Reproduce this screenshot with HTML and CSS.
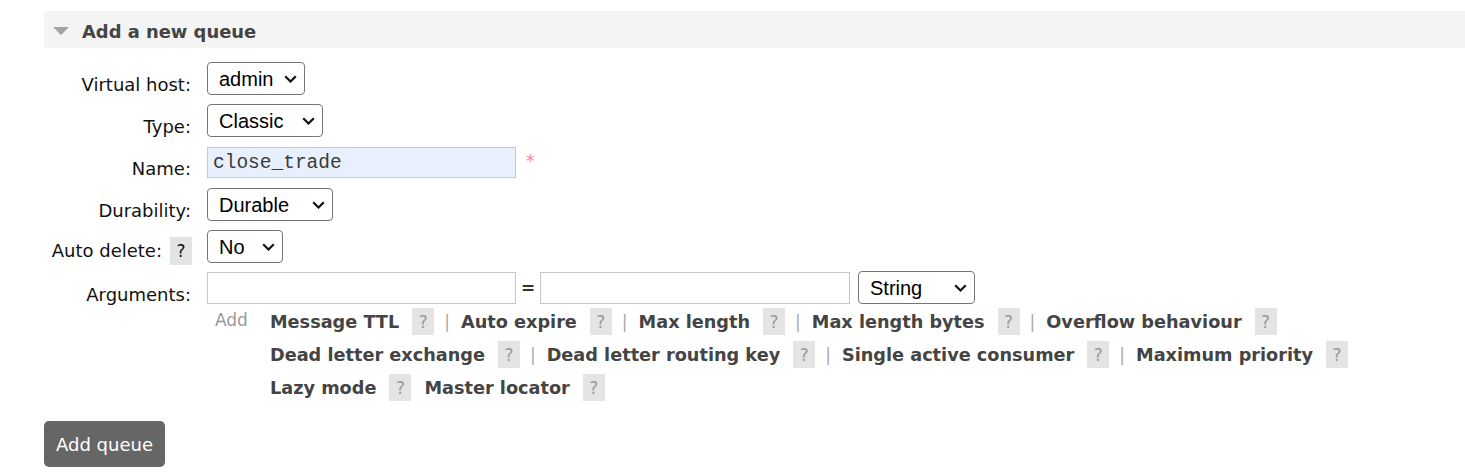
FILE: index.html
```html
<!DOCTYPE html>
<html>
<head>
<meta charset="utf-8">
<link rel="stylesheet" href="styles.css">
</head>
<body>
<div class="page">
  <div class="section-head">
    <span class="tri"></span>
    <h2 class="title">Add a new queue</h2>
  </div>
  <div class="form">
    <div class="row">
      <label class="lbl">Virtual host:</label>
      <div class="ctl"><span class="selwrap"><select class="sel w-vhost"><option>admin</option></select><svg class="chev" width="13" height="8" viewBox="0 0 13 8"><polyline points="1.2,1.2 6.5,6.5 11.8,1.2" fill="none" stroke="#111" stroke-width="2.2"/></svg></span></div>
    </div>
    <div class="row">
      <label class="lbl">Type:</label>
      <div class="ctl"><span class="selwrap"><select class="sel w-type"><option>Classic</option></select><svg class="chev" width="13" height="8" viewBox="0 0 13 8"><polyline points="1.2,1.2 6.5,6.5 11.8,1.2" fill="none" stroke="#111" stroke-width="2.2"/></svg></span></div>
    </div>
    <div class="row">
      <label class="lbl">Name:</label>
      <div class="ctl ctl-name"><input class="txt txt-filled" type="text" value="close_trade"><span class="req">*</span></div>
    </div>
    <div class="row">
      <label class="lbl">Durability:</label>
      <div class="ctl"><span class="selwrap"><select class="sel w-dur"><option>Durable</option></select><svg class="chev" width="13" height="8" viewBox="0 0 13 8"><polyline points="1.2,1.2 6.5,6.5 11.8,1.2" fill="none" stroke="#111" stroke-width="2.2"/></svg></span></div>
    </div>
    <div class="row">
      <label class="lbl lbl-help">Auto delete:<span class="help help-dark">?</span></label>
      <div class="ctl"><span class="selwrap"><select class="sel w-no"><option>No</option></select><svg class="chev" width="13" height="8" viewBox="0 0 13 8"><polyline points="1.2,1.2 6.5,6.5 11.8,1.2" fill="none" stroke="#111" stroke-width="2.2"/></svg></span></div>
    </div>
    <div class="row row-args">
      <label class="lbl">Arguments:</label>
      <div class="ctl ctl-args">
        <input class="txt" type="text">
        <span class="eq">=</span>
        <input class="txt txt-val" type="text">
        <span class="selwrap w-str-wrap"><select class="sel w-str"><option>String</option></select><svg class="chev" width="13" height="8" viewBox="0 0 13 8"><polyline points="1.2,1.2 6.5,6.5 11.8,1.2" fill="none" stroke="#111" stroke-width="2.2"/></svg></span>
      </div>
    </div>
    <div class="arg-help">
      <span class="add">Add</span>
      <div class="links">
        <div class="line">
          <span class="lk">Message TTL</span><span class="help">?</span><span class="pipe">|</span>
          <span class="lk">Auto expire</span><span class="help">?</span><span class="pipe">|</span>
          <span class="lk">Max length</span><span class="help">?</span><span class="pipe">|</span>
          <span class="lk">Max length bytes</span><span class="help">?</span><span class="pipe">|</span>
          <span class="lk">Overflow behaviour</span><span class="help">?</span>
        </div>
        <div class="line">
          <span class="lk">Dead letter exchange</span><span class="help">?</span><span class="pipe">|</span>
          <span class="lk">Dead letter routing key</span><span class="help">?</span><span class="pipe">|</span>
          <span class="lk">Single active consumer</span><span class="help">?</span><span class="pipe">|</span>
          <span class="lk">Maximum priority</span><span class="help">?</span>
        </div>
        <div class="line">
          <span class="lk">Lazy mode</span><span class="help">?</span>
          <span class="lk lk-gap">Master locator</span><span class="help">?</span>
        </div>
      </div>
    </div>
  </div>
  <button class="btn" type="button">Add queue</button>
</div>
</body>
</html>
```

FILE: styles.css
```css
* { box-sizing: border-box; }
body {
  margin: 0;
  background: #fff;
  font-family: "DejaVu Sans", Verdana, sans-serif;
  font-size: 18px;
  color: #111;
}
.page {
  padding: 11px 0 0 44px;
}
.section-head {
  height: 37px;
  background: #f4f4f4;
  display: flex;
  align-items: center;
  padding-top: 3px;
}
.tri {
  width: 0;
  height: 0;
  margin-left: 9px;
  border-left: 8.5px solid transparent;
  border-right: 8.5px solid transparent;
  border-top: 8px solid #a3a3a3;
}
.title {
  margin: 0 0 0 13px;
  font-size: 17.9px;
  font-weight: bold;
  color: #444;
}
.form {
  margin-top: 10px;
}
.row {
  display: flex;
  height: 42px;
}
.row-args { height: 37px; }
.lbl {
  width: 147px;
  text-align: right;
  padding-top: 16px;
  line-height: 22px;
  white-space: nowrap;
}
.lbl-help {
  display: flex;
  justify-content: flex-end;
  align-items: center;
  padding-top: 11px;
  height: 39px;
  width: 148px;
}
.ctl {
  margin-left: 16px;
  padding-top: 4px;
  display: flex;
  align-items: flex-start;
}
.lbl-help + .ctl { margin-left: 15px; }
.ctl-name { padding-top: 5px; }
.ctl-args { padding-top: 3px; align-items: center; height: 36px; }
.selwrap {
  position: relative;
  display: inline-block;
}
.chev {
  position: absolute;
  right: 8px;
  top: 13px;
  pointer-events: none;
}
.sel {
  appearance: none;
  -webkit-appearance: none;
  display: block;
  height: 33px;
  font-family: "Liberation Sans", Arial, sans-serif;
  font-size: 20px;
  color: #000;
  background: #fff;
  border: 1px solid #767676;
  border-radius: 4px;
  padding: 0 4px 0 11px;
}
.w-vhost { width: 98px; }
.w-type { width: 116px; }
.w-dur { width: 126px; }
.w-no { width: 76px; }
.w-str { width: 117px; }
.w-str-wrap { margin-left: 8px; }
.txt {
  width: 309px;
  height: 32px;
  border: 1px solid #c8c8c8;
  background: #fff;
  font-family: "Liberation Mono", "Courier New", monospace;
  font-size: 19.5px;
  color: #3a3a3a;
  padding: 0 5px;
  outline: none;
}
.txt-filled { background: #e8f0fe; height: 31px; }
.txt-val { width: 310px; }
.req {
  color: #f88;
  font-size: 17px;
  margin-left: 10px;
  margin-top: 5px;
  line-height: 18px;
}
.eq {
  width: 24px;
  text-align: center;
  font-weight: bold;
  color: #333;
  font-size: 17px;
}
.help {
  display: inline-flex;
  align-items: center;
  justify-content: center;
  width: 22px;
  height: 27px;
  background: #e4e4e4;
  color: #999;
  font-size: 17px;
  font-weight: normal;
  margin-left: 13px;
}
.help-dark {
  color: #111;
  height: 28px;
  margin-left: 8px;
}
.arg-help {
  display: flex;
  margin-left: 163px;
}
.add {
  width: 63px;
  padding-left: 8px;
  color: #999;
  font-size: 17px;
  line-height: 30px;
}
.links {
  display: flex;
  flex-direction: column;
}
.line {
  display: flex;
  align-items: center;
  height: 33px;
  white-space: nowrap;
}
.lk {
  font-weight: bold;
  font-size: 17.7px;
  color: #444;
}
.lk-gap { margin-left: 13px; }
.pipe {
  color: #aaa;
  font-size: 17px;
  margin: 0 11px 0 10px;
}
.btn {
  margin-top: 17px;
  width: 121px;
  height: 46px;
  background: #666;
  color: #fff;
  border: none;
  border-radius: 5px;
  font-family: "DejaVu Sans", Verdana, sans-serif;
  font-size: 18px;
  padding: 0;
}
```
